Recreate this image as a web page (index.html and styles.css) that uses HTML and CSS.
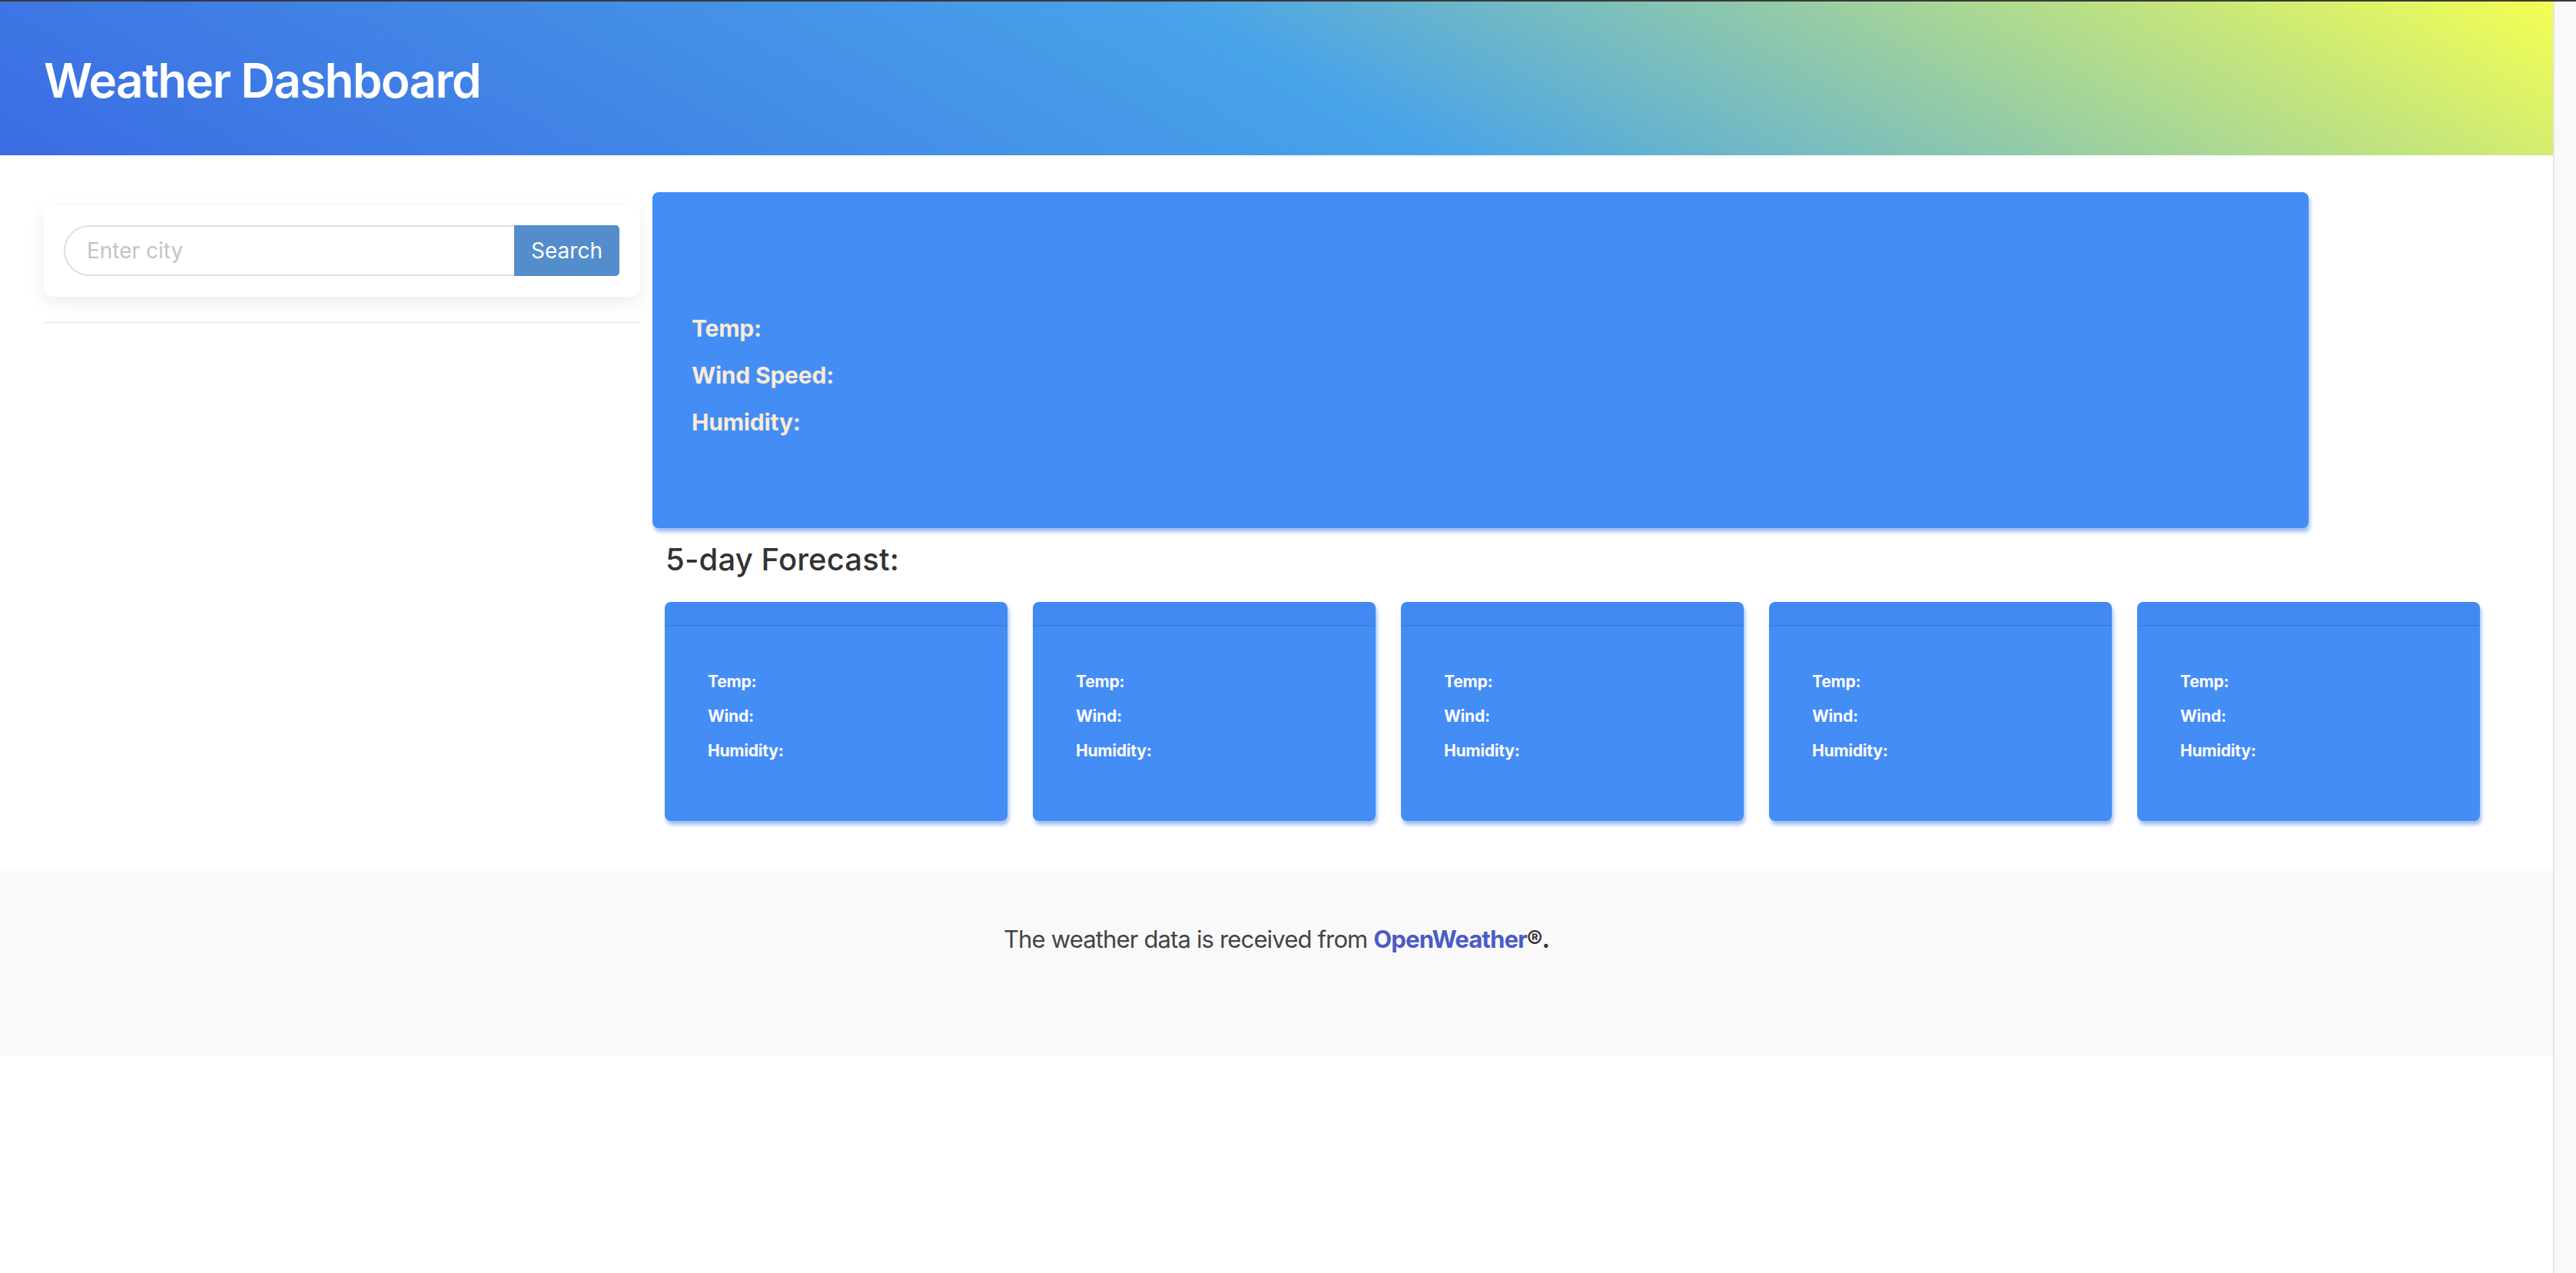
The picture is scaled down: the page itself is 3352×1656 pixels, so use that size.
FILE: index.html
```html
<!DOCTYPE html>
<html lang="en">
<head>
<meta charset="utf-8">
<title>Weather Dashboard</title>
<link rel="stylesheet" href="styles.css">
</head>
<body>
<div class="topbar"></div>
<div class="window">
  <div class="page">
    <header class="header">
      <h1 class="title">Weather Dashboard</h1>
    </header>
    <main class="content">
      <aside class="sidebar">
        <div class="search-card">
          <form class="search">
            <input class="search-input" type="text" placeholder="Enter city">
            <button class="search-btn" type="button">Search</button>
          </form>
        </div>
        <div class="divider"></div>
      </aside>
      <section class="main">
        <div class="current">
          <p class="current-line">Temp:</p>
          <p class="current-line">Wind Speed:</p>
          <p class="current-line">Humidity:</p>
        </div>
        <div class="forecast">
          <h3 class="forecast-title">5-day Forecast:</h3>
          <div class="forecast-row">
            <div class="fcard"><div class="fcard-head"></div><div class="fcard-body"><p class="fline">Temp:</p><p class="fline">Wind:</p><p class="fline">Humidity:</p></div></div>
            <div class="fcard"><div class="fcard-head"></div><div class="fcard-body"><p class="fline">Temp:</p><p class="fline">Wind:</p><p class="fline">Humidity:</p></div></div>
            <div class="fcard"><div class="fcard-head"></div><div class="fcard-body"><p class="fline">Temp:</p><p class="fline">Wind:</p><p class="fline">Humidity:</p></div></div>
            <div class="fcard"><div class="fcard-head"></div><div class="fcard-body"><p class="fline">Temp:</p><p class="fline">Wind:</p><p class="fline">Humidity:</p></div></div>
            <div class="fcard"><div class="fcard-head"></div><div class="fcard-body"><p class="fline">Temp:</p><p class="fline">Wind:</p><p class="fline">Humidity:</p></div></div>
          </div>
        </div>
      </section>
    </main>
    <footer class="footer">
      <p class="footer-text">The weather data is received from <a class="footer-link" href="#">OpenWeather</a><strong class="footer-reg">®.</strong></p>
    </footer>
  </div>
  <div class="scrollbar"></div>
</div>
</body>
</html>
```
FILE: styles.css
```css
* { box-sizing: border-box; }
html, body { margin: 0; padding: 0; }
body {
  font-family: Inter, "Noto Sans", "Liberation Sans", sans-serif;
  background: #ffffff;
  color: #333333;
  width: 3352px;
  height: 1656px;
  overflow: hidden;
}
.topbar { height: 2px; background: #393939; }
.window { display: flex; height: 1654px; }
.page { flex: 1; min-width: 0; }
.scrollbar {
  width: 30px;
  flex: none;
  background: #f9f9f9;
  border-left: 2px solid #e4e4e4;
}

/* header */
.header {
  height: 200px;
  padding: 66px 57px 0;
  background: linear-gradient(30deg, #3b6ce3 0%, #48a3e9 51%, #f5ff52 100%);
}
.title {
  margin: 0;
  font-size: 62px;
  line-height: 1.2;
  font-weight: 600;
  color: #ffffff;
  letter-spacing: -1.7px;
}

/* content */
.content {
  display: flex;
  gap: 16px;
  padding: 48px 0 65px 56px;
}
.sidebar { width: 777px; flex: none; padding-top: 16px; }
.search-card {
  background: #fff;
  border-radius: 10px;
  padding: 27px;
  box-shadow: 0 8px 22px rgba(0, 0, 0, 0.07), 0 0 2px rgba(0, 0, 0, 0.05);
}
.search { display: flex; height: 66px; margin: 0; }
.search-input {
  flex: 1;
  min-width: 0;
  height: 66px;
  border: 2px solid #dedede;
  border-right: none;
  border-radius: 33px 0 0 33px;
  padding: 0 28px;
  font-family: inherit;
  font-size: 28px;
  color: #333;
  outline: none;
  background: #fff;
}
.search-input::placeholder { color: #c4c4c4; }
.search-btn {
  width: 137px;
  height: 66px;
  border: none;
  border-radius: 0 5px 5px 0;
  background: #548dcc;
  color: #fff;
  font-family: inherit;
  font-size: 28px;
  padding: 0;
}
.divider { height: 3px; background: #f3f3f3; margin-top: 32px; }

.main { flex: none; width: 2400px; }
.current {
  width: 2155px;
  background: #448df5;
  border-radius: 8px;
  padding: 147px 51px 107px;
  box-shadow: 2px 5px 5px rgba(40, 110, 220, 0.45);
}
.current-line {
  margin: 0;
  font-size: 30px;
  line-height: 61px;
  font-weight: 700;
  color: #faebd7;
  letter-spacing: -0.2px;
}

.forecast { padding-left: 16px; }
.forecast-title {
  margin: 17px 0 31px 1px;
  font-size: 40px;
  line-height: 48px;
  font-weight: 500;
  color: #333333;
  letter-spacing: 0.15px;
}
.forecast-row { display: flex; gap: 33px; }
.fcard {
  width: 446px;
  height: 285px;
  background: #448df5;
  border-radius: 8px;
  box-shadow: 2px 5px 5px rgba(40, 110, 220, 0.45);
  overflow: hidden;
}
.fcard-head {
  height: 32px;
  background: rgba(0, 0, 0, 0.015);
  border-bottom: 2px solid rgba(0, 0, 0, 0.06);
}
.fcard-body { padding: 49px 56px 0; }
.fline {
  margin: 0;
  font-size: 21px;
  line-height: 45px;
  font-weight: 700;
  color: #ffffff;
  letter-spacing: -0.2px;
}

/* footer */
.footer {
  height: 240px;
  background: #f9f9f9;
  padding-top: 66px;
  text-align: center;
}
.footer-text {
  margin: 0;
  font-size: 31px;
  line-height: 46px;
  color: #444444;
  letter-spacing: -0.85px;
}
.footer-link { color: #4a5bc7; font-weight: 700; text-decoration: none; }
.footer-reg { color: #333; font-weight: 700; }
```
